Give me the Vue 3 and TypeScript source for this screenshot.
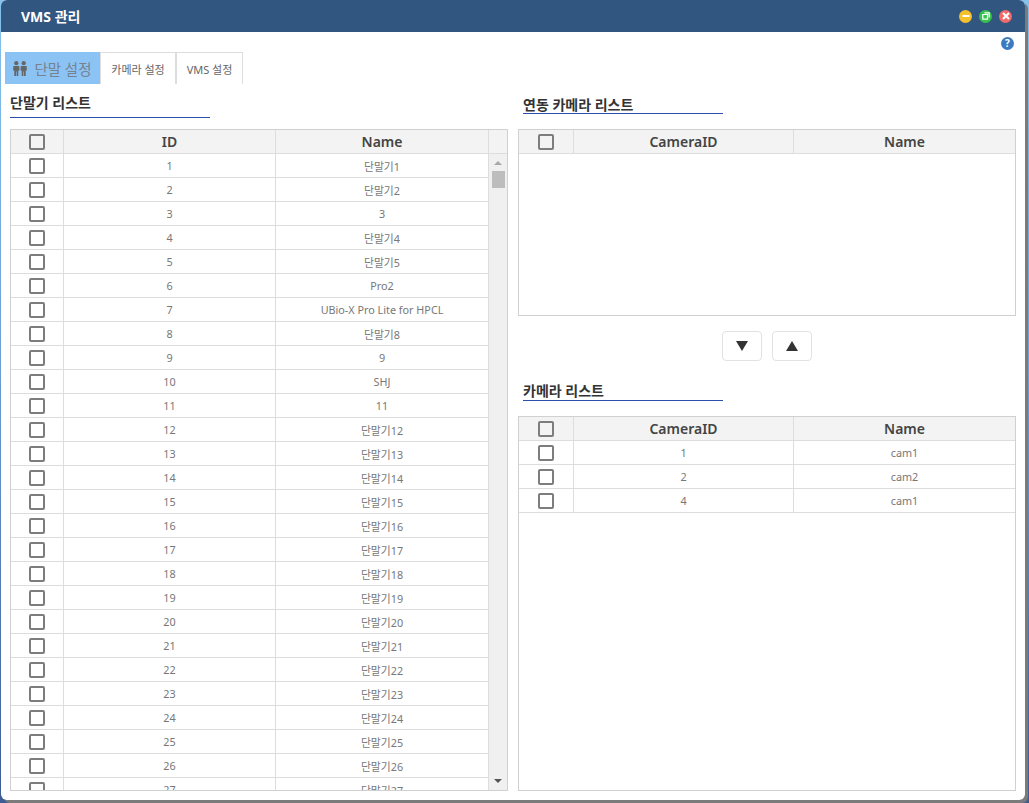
<script setup lang="ts">
interface Device { id: number; name: string }
interface Camera { id: number; name: string }

const namedDevices: Record<number, string> = {
  3: '3',
  6: 'Pro2',
  7: 'UBio-X Pro Lite for HPCL',
  9: '9',
  10: 'SHJ',
  11: '11'
}

const devices: Device[] = Array.from({ length: 27 }, (_, i) => {
  const id = i + 1
  return { id, name: namedDevices[id] ?? `단말기${id}` }
})

const cameras: Camera[] = [
  { id: 1, name: 'cam1' },
  { id: 2, name: 'cam2' },
  { id: 4, name: 'cam1' }
]
</script>

<template>
  <div class="desktop">
    <div class="window">
      <header class="title-bar">
        <h1>VMS 관리</h1>
        <div class="win-buttons">
          <button class="win-btn min">
            <svg width="8" height="8" viewBox="0 0 8 8"><rect x="0.5" y="3" width="7" height="2" fill="#fff" /></svg>
          </button>
          <button class="win-btn max">
            <svg width="8" height="8" viewBox="0 0 8 8" fill="none" stroke="#fff" stroke-width="1.2"><path d="M2.5 .8h4.7v4.7M.8 2.5h4.7v4.7H.8z" /></svg>
          </button>
          <button class="win-btn close">
            <svg width="8" height="8" viewBox="0 0 8 8" stroke="#fff" stroke-width="2"><path d="M1 1l6 6M7 1l-6 6" /></svg>
          </button>
        </div>
      </header>

      <div class="content">
        <div class="help-row">
          <span class="help">?</span>
        </div>

        <nav class="tabs">
          <div class="tab active">
            <svg class="tab-icon" width="14" height="15" viewBox="0 0 14 15" fill="#666">
              <circle cx="3.3" cy="2.2" r="2.1" />
              <circle cx="10.7" cy="2.2" r="2.1" />
              <path d="M.4 5h5.8l.3 4.2-1.2.6V15H3.6v-4.4h-.6V15H1.3V9.8L.1 9.2z" />
              <path d="M7.8 5h5.8l.3 4.2-1.2.6V15H11v-4.4h-.6V15H8.7V9.8l-1.2-.6z" />
            </svg>
            단말 설정
          </div>
          <div class="tab">카메라 설정</div>
          <div class="tab">VMS 설정</div>
        </nav>

        <div class="columns">
          <section class="left">
            <h2 class="section-title left-title">단말기 리스트</h2>
            <div class="grid-box device-box">
              <div class="grid-main">
                <div class="row head device-cols">
                  <div class="cell"><span class="check" /></div>
                  <div class="cell">ID</div>
                  <div class="cell">Name</div>
                </div>
                <div class="body">
                  <div v-for="d in devices" :key="d.id" class="row device-cols">
                    <div class="cell"><span class="check" /></div>
                    <div class="cell">{{ d.id }}</div>
                    <div class="cell">{{ d.name }}</div>
                  </div>
                </div>
              </div>
              <div class="scrollbar">
                <div class="scroll-head" />
                <div class="scroll-track">
                  <span class="arrow up" />
                  <span class="thumb" />
                  <span class="arrow down" />
                </div>
              </div>
            </div>
          </section>

          <section class="right">
            <h2 class="section-title linked-title">연동 카메라 리스트</h2>
            <div class="grid-box linked-box">
              <div class="grid-main">
                <div class="row head camera-cols">
                  <div class="cell"><span class="check" /></div>
                  <div class="cell">CameraID</div>
                  <div class="cell">Name</div>
                </div>
              </div>
            </div>

            <div class="move-buttons">
              <button class="move-btn"><span class="tri tri-down" /></button>
              <button class="move-btn"><span class="tri tri-up" /></button>
            </div>

            <h2 class="section-title camera-title">카메라 리스트</h2>
            <div class="grid-box camera-box">
              <div class="grid-main">
                <div class="row head camera-cols">
                  <div class="cell"><span class="check" /></div>
                  <div class="cell">CameraID</div>
                  <div class="cell">Name</div>
                </div>
                <div v-for="(c, i) in cameras" :key="i" class="row camera-cols">
                  <div class="cell"><span class="check" /></div>
                  <div class="cell">{{ c.id }}</div>
                  <div class="cell">{{ c.name }}</div>
                </div>
              </div>
            </div>
          </section>
        </div>
      </div>
    </div>
  </div>
</template>

<style>
html,
body {
  margin: 0;
  overflow: hidden;
}
</style>

<style scoped>
.desktop {
  width: 1029px;
  height: 803px;
  background: linear-gradient(#86c2ea, #6aa0d4 45%, #3c5c92);
  font-family: "Noto Sans", "Noto Sans CJK KR", sans-serif;
  color: #555;
}

.window {
  width: 1024px;
  height: 800px;
  margin-left: 1px;
  background: #fff;
  border-radius: 6px;
  box-shadow: 3px 3px 0 #7b7b7b;
  display: flex;
  flex-direction: column;
}

.title-bar {
  flex: 0 0 32px;
  background: #31567f;
  border-radius: 6px 6px 0 0;
  display: flex;
  align-items: center;
  justify-content: space-between;
  padding: 0 13px 0 20px;
}

.title-bar h1 {
  margin: 0;
  font-size: 14px;
  font-weight: 700;
  color: #fff;
}

.win-buttons {
  display: flex;
  gap: 7px;
}

.win-btn {
  width: 13px;
  height: 13px;
  padding: 0;
  border: none;
  border-radius: 50%;
  display: flex;
  align-items: center;
  justify-content: center;
}

.win-btn.min { background: #f6bf2c; }
.win-btn.max { background: #36c24c; }
.win-btn.close { background: #ef6a6a; }

.content {
  flex: 1;
  min-height: 0;
  display: flex;
  flex-direction: column;
  padding: 0 8px 0 4px;
}

.help-row {
  box-sizing: border-box;
  height: 20px;
  display: flex;
  justify-content: flex-end;
  align-items: flex-end;
  padding: 0 3px 2px 0;
}

.help {
  width: 13px;
  height: 13px;
  border-radius: 50%;
  background: #3c7bc0;
  color: #fff;
  font-size: 10px;
  font-weight: 700;
  line-height: 13px;
  text-align: center;
}

.tabs {
  display: flex;
  height: 32px;
}

.tab {
  box-sizing: border-box;
  width: 67px;
  border: 1px solid #ddd;
  border-bottom: none;
  font-size: 11px;
  color: #666;
  display: flex;
  align-items: center;
  justify-content: center;
}

.tab:nth-child(2) {
  width: 76px;
}

.tab.active {
  width: 95px;
  background: #8cc3f5;
  border: none;
  font-size: 14.5px;
  color: #76828f;
  gap: 7px;
}

.columns {
  flex: 1;
  min-height: 0;
  display: flex;
  gap: 10px;
  padding-left: 5px;
}

.left,
.right {
  width: 498px;
  display: flex;
  flex-direction: column;
}

.section-title {
  margin: 11px 0 15px 5px;
  width: 200px;
  height: 18px;
  border-bottom: 1px solid #2a50ae;
  font-size: 14px;
  font-weight: 700;
  line-height: 18px;
  color: #333;
}

.left-title {
  margin: 10px 0 11px 0;
  height: 23px;
}

.linked-title {
  margin-top: 12px;
  height: 17px;
}

.camera-title {
  margin-top: 21px;
}

.grid-box {
  box-sizing: border-box;
  border: 1px solid #d0d0d0;
  display: flex;
  overflow: hidden;
}

.device-box {
  height: 662px;
}

.linked-box {
  height: 187px;
}

.camera-box {
  height: 375px;
}

.grid-main {
  flex: 1;
  min-width: 0;
}

.row {
  display: grid;
  height: 24px;
  box-sizing: border-box;
  border-bottom: 1px solid #ddd;
  font-size: 10.8px;
  color: #777;
}

.row.head {
  background: #f3f3f3;
  font-size: 14px;
  font-weight: 600;
  color: #444;
}

.device-cols {
  grid-template-columns: 53px 212px 1fr;
}

.camera-cols {
  grid-template-columns: 55px 220px 1fr;
}

.cell {
  display: flex;
  align-items: center;
  justify-content: center;
  border-right: 1px solid #ddd;
  min-width: 0;
}

.cell:last-child {
  border-right: none;
}

.check {
  box-sizing: border-box;
  width: 16px;
  height: 16px;
  border: 2px solid #7d7d7d;
  border-radius: 2px;
  background: #fff;
}

.head .check {
  background: #f3f3f3;
}

.scrollbar {
  flex: 0 0 18px;
  border-left: 1px solid #ddd;
  display: flex;
  flex-direction: column;
  background: #f0f0f0;
}

.scroll-head {
  height: 24px;
  box-sizing: border-box;
  border-bottom: 1px solid #ddd;
  background: #f3f3f3;
}

.scroll-track {
  flex: 1;
  display: flex;
  flex-direction: column;
  align-items: center;
  padding: 7px 0 7px;
}

.thumb {
  width: 13px;
  height: 17px;
  margin-top: 6px;
  background: #bdbdbd;
}

.arrow {
  width: 0;
  height: 0;
  border-left: 4px solid transparent;
  border-right: 4px solid transparent;
}

.arrow.up {
  border-bottom: 4px solid #a8a8a8;
}

.arrow.down {
  margin-top: auto;
  border-top: 4px solid #555;
}

.move-buttons {
  display: flex;
  justify-content: center;
  gap: 10px;
  margin-top: 15px;
  height: 30px;
}

.move-btn {
  box-sizing: border-box;
  width: 40px;
  height: 30px;
  padding: 0;
  background: #fff;
  border: 1px solid #e2e2e2;
  border-radius: 4px;
  display: flex;
  align-items: center;
  justify-content: center;
}

.tri {
  width: 0;
  height: 0;
  border-left: 6.5px solid transparent;
  border-right: 6.5px solid transparent;
}

.tri-down {
  border-top: 10px solid #333;
}

.tri-up {
  border-bottom: 10px solid #333;
}
</style>
